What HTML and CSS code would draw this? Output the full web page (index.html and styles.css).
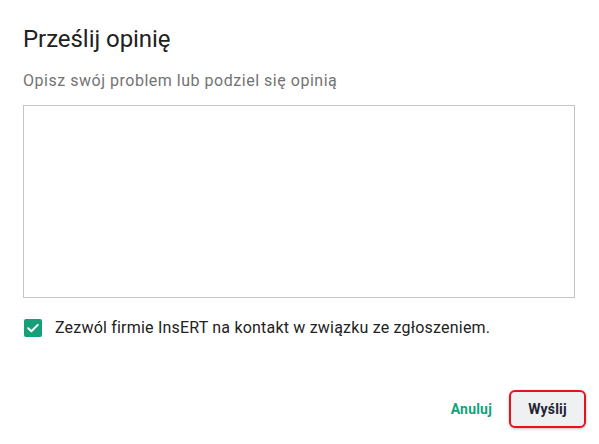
FILE: index.html
```html
<!DOCTYPE html>
<html lang="pl">
<head>
<meta charset="utf-8">
<link rel="stylesheet" href="styles.css">
</head>
<body>
<div class="dialog">
  <h1 class="title">Prześlij opinię</h1>
  <p class="subtitle">Opisz swój problem lub podziel się opinią</p>
  <textarea class="area"></textarea>
  <label class="check">
    <span class="box"><svg width="18" height="18" viewBox="0 0 18 18"><path d="M4.2 9.2l3.2 3.1 6.4-6.4" fill="none" stroke="#fff" stroke-width="2" stroke-linecap="round" stroke-linejoin="round"/></svg></span>
    <span class="label">Zezwól firmie InsERT na kontakt w związku ze zgłoszeniem.</span>
  </label>
  <div class="actions">
    <button class="btn cancel">Anuluj</button>
    <button class="btn send">Wyślij</button>
  </div>
</div>
</body>
</html>
```
FILE: styles.css
```css
html, body { margin: 0; padding: 0; background: #fff; }
body { font-family: Roboto, "Noto Sans", sans-serif; width: 599px; height: 444px; overflow: hidden; }
.dialog { padding: 24px 13px 0 23px; display: flex; flex-direction: column; }
.title { margin: 0; font-size: 24px; font-weight: 400; color: #212121; line-height: 30px; letter-spacing: -0.05px; }
.subtitle { margin: 17px 0 0; font-size: 16px; color: #737373; line-height: 20px; letter-spacing: 0.52px; }
.area { margin: 14px 0 0; width: 552px; height: 193px; box-sizing: border-box; border: 1px solid #c4c4c4; resize: none; padding: 8px; font: inherit; outline: none; }
.check { display: flex; align-items: center; margin-top: 20px; margin-left: 1px; gap: 13px; }
.box { width: 18px; height: 18px; background: #16a07a; border-radius: 2px; display: flex; }
.label { font-size: 16px; color: #222; line-height: 20px; letter-spacing: 0.2px; }
.actions { display: flex; justify-content: flex-end; align-items: center; margin-top: 52px; gap: 17px; }
.btn { font-family: inherit; font-size: 14px; font-weight: 700; border: none; background: none; cursor: pointer; letter-spacing: 0.2px; }
.cancel { color: #16a07a; padding: 0; }
.send { color: #1d2433; background: #eff0f2; border: 2px solid #e8121a; border-radius: 6px; width: 77px; height: 38px; box-shadow: 0 1px 3px rgba(0,0,0,0.25); }
```
